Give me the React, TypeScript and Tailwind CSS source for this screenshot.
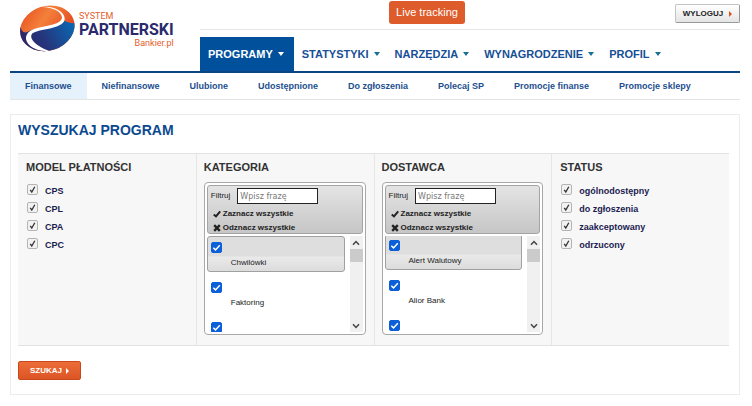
import { useState } from "react";

const NAV = ["PROGRAMY", "STATYSTYKI", "NARZĘDZIA", "WYNAGRODZENIE", "PROFIL"];
const SUBNAV = [
  "Finansowe",
  "Niefinansowe",
  "Ulubione",
  "Udostępnione",
  "Do zgłoszenia",
  "Polecaj SP",
  "Promocje finanse",
  "Promocje sklepy",
];

function Logo() {
  return (
    <a href="#" className="flex w-[190px] shrink-0 pt-[5px] pl-[10px]" aria-label="System Partnerski Bankier.pl">
      <svg viewBox="0 0 165 141" className="h-[47px] w-[55px] shrink-0" aria-hidden="true">
        <defs>
          <linearGradient id="warm" x1="0" y1="0" x2="1" y2="0.6">
            <stop offset="0" stopColor="#e4481c" />
            <stop offset="0.45" stopColor="#f4803a" />
            <stop offset="1" stopColor="#e03c1c" />
          </linearGradient>
          <linearGradient id="cool" x1="0" y1="0.6" x2="1" y2="0.3">
            <stop offset="0" stopColor="#2a2668" />
            <stop offset="0.4" stopColor="#26357c" />
            <stop offset="1" stopColor="#0a66b0" />
          </linearGradient>
          <clipPath id="ball">
            <ellipse cx="82" cy="70" rx="83" ry="67" transform="rotate(-18 82 70)" />
          </clipPath>
        </defs>
        <g clipPath="url(#ball)">
          <rect width="165" height="141" fill="url(#warm)" />
          <path d="M0 60C4 80 12 86 24 80C50 64 110 76 130 46C142 52 154 56 165 54V141H0Z" fill="url(#cool)" />
          <path
            d="M60 6C96 4 126 20 126 38C122 62 70 60 40 73C14 84 10 106 32 124C46 135 66 139 94 140C60 128 24 106 36 86C58 69 126 74 134 44C137 20 100 0 60 6Z"
            fill="#fff"
          />
        </g>
      </svg>
      <span className="flex flex-col pt-[7px] pl-1 font-[Roboto,sans-serif]">
        <span className="text-[9px] leading-[9px] text-[#e4602c]">SYSTEM</span>
        <span className="text-[16px] leading-[18px] font-bold text-[#2a2a6c]">PARTNERSKI</span>
        <span className="self-end text-[9px] leading-[9px] text-[#e4602c]">Bankier.pl</span>
      </span>
    </a>
  );
}

function Tick({ label }: { label: string }) {
  return (
    <label className="flex h-[18px] items-start gap-[7px] text-[9px] leading-[18px] font-bold text-[#1c1c50]">
      <span className="relative mt-[3px] size-[11px]">
        <input
          type="checkbox"
          defaultChecked
          className="peer block size-[11px] appearance-none rounded-[2px] border border-[#b4b4b4] bg-[#f2f2f2]"
        />
        <svg viewBox="0 0 11 11" className="pointer-events-none absolute inset-0 hidden size-[11px] peer-checked:block">
          <path d="M3.2 5.8L4.8 8L7.8 2.8" fill="none" stroke="#333" strokeWidth="1.3" />
        </svg>
      </span>
      <span className="pt-px">{label}</span>
    </label>
  );
}

function TickColumn({ title, items }: { title: string; items: string[] }) {
  return (
    <fieldset className="border-l border-[#e6e6e6] pl-2 first:border-l-0">
      <legend className="float-left h-[27px] w-full pt-[6px] text-[11px] leading-[14px] font-bold text-[#333]">{title}</legend>
      <div className="clear-both pl-px">
        {items.map((i) => (
          <Tick key={i} label={i} />
        ))}
      </div>
    </fieldset>
  );
}

function BlueCheck({ label, name, first }: { label?: string; name: string; first: boolean }) {
  return (
    <label
      className={
        "block h-[36px] shrink-0 rounded-[3px] border pt-[5px] pl-[3px] text-[8px] text-[#222] " +
        (first ? "border-[#a0a0a0] bg-linear-to-b from-[#dedede] from-55% via-[#e9e9e9] via-60% to-[#dcdcdc]" : "border-transparent")
      }
    >
      <span className="relative block size-[11px]">
        <input
          type="checkbox"
          defaultChecked
          aria-label={name}
          className="peer block size-[11px] appearance-none rounded-[2px] border border-[#0b5fd8] bg-white checked:bg-[#0b5fd8]"
        />
        <svg viewBox="0 0 11 11" className="pointer-events-none absolute inset-0 hidden size-[11px] peer-checked:block">
          <path d="M2.3 5.7L4.5 7.9L8.8 3.2" fill="none" stroke="#fff" strokeWidth="1.5" />
        </svg>
      </span>
      {label && <span className="block pt-[5px] pl-[20px] leading-[10px]">{label}</span>}
    </label>
  );
}

function Chevron({ up }: { up?: boolean }) {
  return (
    <svg viewBox="0 0 8 6" className="h-[6px] w-[8px]" aria-hidden="true">
      <path d={up ? "M1 4.8L4 1.6L7 4.8" : "M1 1.2L4 4.4L7 1.2"} fill="none" stroke="#444" strokeWidth="1.5" />
    </svg>
  );
}

function ListColumn({ title, items, scrolled }: { title: string; items: string[]; scrolled?: boolean }) {
  const [query, setQuery] = useState("");
  return (
    <section className="border-l border-[#e6e6e6] pr-[8px] pl-[7px]">
      <h2 className="h-[28px] pt-[6px] text-[11px] leading-[14px] font-bold text-[#333]">{title}</h2>
      <div className="rounded-[4px] border border-[#a8a8a8] bg-white p-[2px]">
        <div className="h-[49px] rounded-[3px] border border-[#a4a4a4] bg-linear-to-b from-[#e4e4e4] to-[#c6c6c6] pt-[2px] pl-[3px] text-[8px] text-[#222]">
          <label className="flex items-center gap-[7px]">
            Filtruj
            <input
              value={query}
              onChange={(e) => setQuery(e.target.value)}
              placeholder="Wpisz frazę"
              className="h-[16px] w-[81px] border border-[#222] bg-white px-[2px] font-['DejaVu_Sans',sans-serif] text-[8px] placeholder:text-[#777]"
            />
          </label>
          <div className="flex flex-col pt-[3px] pl-[2px] font-bold">
            <button type="button" className="flex h-[14px] items-center gap-[2px]">
              <svg viewBox="0 0 8 8" className="size-[8px]" aria-hidden="true">
                <path d="M0.8 4.4L3 6.4L7.2 1.4" fill="none" stroke="#222" strokeWidth="2" />
              </svg>
              Zaznacz wszystkie
            </button>
            <button type="button" className="flex h-[14px] items-center gap-[2px]">
              <svg viewBox="0 0 8 8" className="size-[8px]" aria-hidden="true">
                <path d="M1.2 1.2L6.8 6.8M6.8 1.2L1.2 6.8" fill="none" stroke="#222" strokeWidth="2.4" />
              </svg>
              Odznacz wszystkie
            </button>
          </div>
        </div>
        <div className="mt-[2px] flex h-[96px] gap-[5px] overflow-hidden">
          <div className={"flex grow flex-col gap-[4px] overflow-hidden " + (scrolled ? "*:first:-mt-[2px]" : "")}>
            {items.map((i, n) => (
              <BlueCheck key={i} label={i} name={i} first={n === 0} />
            ))}
            <BlueCheck name={title} first={false} />
          </div>
          <div className="flex w-[13px] shrink-0 flex-col items-center bg-[#f0f0f0]">
            <span className="flex h-[13px] items-center">
              <Chevron up />
            </span>
            <span className="h-[13px] w-full bg-[#cbcbcb]" />
            <span className="mt-auto flex h-[13px] items-center">
              <Chevron />
            </span>
          </div>
        </div>
      </div>
    </section>
  );
}

export default function App() {
  return (
    <div className="bg-white pr-[12px] pb-[10px] pl-[10px] font-['Liberation_Sans',Arial,sans-serif]">
      <header className="flex h-[71px]">
        <Logo />
        <div className="flex grow flex-col">
          <div className="flex h-[30px] items-start border-b border-[#e6e6e6] pl-[189px]">
            <button type="button" className="mt-px h-[23px] w-[76px] rounded-[3px] bg-[#de5b2b] text-[11px] whitespace-nowrap text-white">
              Live tracking
            </button>
            <button
              type="button"
              className="mt-[4px] ml-auto flex h-[19px] w-[65px] items-center justify-center gap-[6px] rounded-[2px] border border-[#c4c4c4] border-r-[#999] border-b-[#999] bg-linear-to-b from-white to-[#e4e4e4] text-[8px] font-bold text-[#222]"
            >
              WYLOGUJ
              <span className="border-y-[3px] border-l-[3px] border-y-transparent border-l-[#e0501f]" />
            </button>
          </div>
          <nav className="mt-[7px] flex h-[34px] text-[11px] font-bold text-[#174f96]">
            {NAV.map((n, i) => (
              <a
                key={n}
                href="#"
                className={
                  "flex items-center gap-[5px] pl-[8px] whitespace-nowrap " + (i === 0 ? "bg-[#00509c] pr-[10px] text-white" : "pr-[7px]")
                }
              >
                {n}
                <span
                  className={
                    "border-x-[3px] border-t-[4px] border-x-transparent " + (i === 0 ? "border-t-white" : "border-t-[#176f94]")
                  }
                />
              </a>
            ))}
          </nav>
        </div>
      </header>
      <nav className="flex h-[29px] border-t-2 border-b border-t-[#0b4583] border-b-[#e4e4e4] text-[9px] font-bold text-[#1d4f8f]">
        {SUBNAV.map((s, i) => (
          <a
            key={s}
            href="#"
            className={"flex items-center px-[15px] pt-px whitespace-nowrap " + (i === 0 ? "bg-[#e6f2fb]" : "")}
          >
            {s}
          </a>
        ))}
      </nav>

      <main className="mt-[14px] border border-[#ececec] pt-0 pr-[10px] pb-[14px] pl-[7px]">
        <h1 className="h-[38px] pt-[6px] text-[14px] leading-[18px] font-bold text-[#0c4a90]">WYSZUKAJ PROGRAM</h1>
        <form onSubmit={(e) => e.preventDefault()}>
          <div className="grid grid-cols-4 border-y border-[#e2e2e2] bg-[#f7f7f7] *:pb-[10px]">
            <TickColumn title="MODEL PŁATNOŚCI" items={["CPS", "CPL", "CPA", "CPC"]} />
            <ListColumn title="KATEGORIA" items={["Chwilówki", "Faktoring"]} />
            <ListColumn title="DOSTAWCA" items={["Alert Walutowy", "Alior Bank"]} scrolled />
            <TickColumn title="STATUS" items={["ogólnodostępny", "do zgłoszenia", "zaakceptowany", "odrzucony"]} />
          </div>
          <button
            type="submit"
            className="mt-[15px] flex h-[19px] w-[63px] items-center justify-center gap-[4px] rounded-[2px] border border-[#c8481c] bg-linear-to-b from-[#ec6d38] to-[#dc5524] text-[8px] font-bold text-white"
          >
            SZUKAJ
            <span className="border-y-[3px] border-l-[3px] border-y-transparent border-l-white" />
          </button>
        </form>
      </main>
    </div>
  );
}
